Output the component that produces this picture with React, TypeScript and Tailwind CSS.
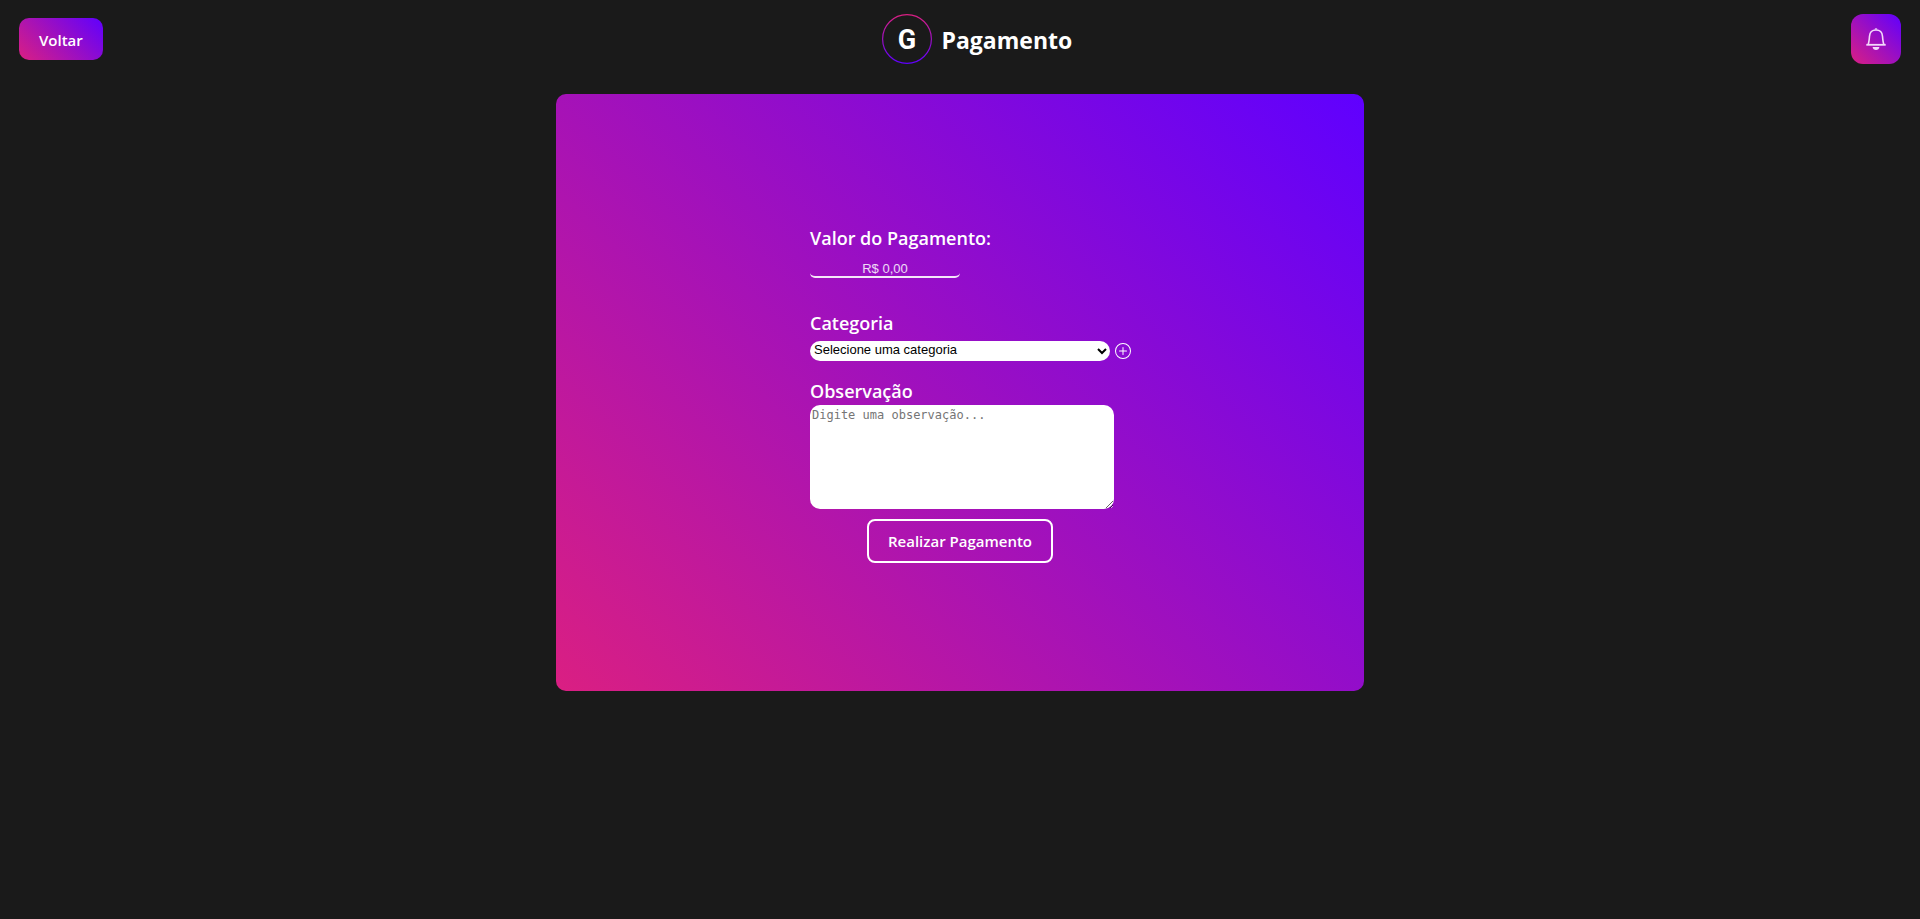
import { useState } from "react";
import { BsPlusCircle } from "react-icons/bs";

const labelClass = "text-lg leading-6 font-semibold";

function BellIcon() {
  return (
    <svg viewBox="0 0 20 22" className="h-[22px] w-5" fill="none" stroke="#f3d9fb" aria-hidden="true">
      <path d="M8.6 1.6a1.4 1.4 0 0 1 2.8 0z" fill="#f3d9fb" stroke="none" />
      <path
        d="M2.2 16.2C3 14.4 3.2 12 3.5 8.2 3.8 4.200 6.400 2 10 2s6.200 2.200 6.500 6.200c.3 3.800.5 6.200 1.300 8"
        strokeWidth="1.6"
      />
      <path d="M0.300 16.800h19.400" strokeWidth="1.800" />
      <path d="M6.600 19h6.800c-.2 1.900-1.600 3-3.400 3s-3.200-1.100-3.400-3z" fill="#f3d9fb" stroke="none" />
    </svg>
  );
}

export default function App() {
  const [amount, setAmount] = useState("");
  const [category, setCategory] = useState("");
  const [note, setNote] = useState("");

  return (
    <div className="flex min-h-screen flex-col bg-[#1a1a1a] font-['Open_Sans',sans-serif] text-white">
      <header className="flex items-center justify-between px-[19px] pt-[14px]">
        <button
          type="button"
          className="h-[42px] rounded-[10px] bg-linear-[45deg,#da1f82,#5f00ff] px-5 pt-[2px] text-[15px] font-semibold"
        >
          Voltar
        </button>
        <div className="flex items-center gap-[10px]">
          <svg viewBox="0 0 50 50" className="size-[50px]" role="img" aria-label="G">
            <defs>
              <linearGradient id="ring" x1="0" y1="0" x2="0" y2="1">
                <stop offset="0" stopColor="#da1f82" />
                <stop offset="1" stopColor="#5f00ff" />
              </linearGradient>
            </defs>
            <circle cx="25" cy="25" r="24.4" fill="none" stroke="url(#ring)" strokeWidth="1.2" />
            <text
              x="25"
              y="35"
              textAnchor="middle"
              fill="#fff"
              fontFamily="Roboto, sans-serif"
              fontSize="27"
              fontWeight="700"
            >
              G
            </text>
          </svg>
          <h1 className="pt-[2px] text-[23px] leading-8 font-bold">Pagamento</h1>
        </div>
        <button
          type="button"
          aria-label="Notificações"
          className="flex size-[50px] items-center justify-center rounded-xl bg-linear-[45deg,#da1f82,#5f00ff]"
        >
          <BellIcon />
        </button>
      </header>

      <main className="mx-auto mt-[30px] flex w-full max-w-[808px] justify-center rounded-[10px] bg-linear-[45deg,#da1f82,#5f00ff] pt-[132px] pb-32">
        <form className="flex w-[300px] flex-col items-start" onSubmit={(e) => e.preventDefault()}>
          <label htmlFor="amount" className={labelClass}>
            Valor do Pagamento:
          </label>
          <input
            id="amount"
            type="text"
            value={amount}
            onChange={(e) => setAmount(e.target.value)}
            placeholder="R$ 0,00"
            className="mt-2 h-5 w-[150px] rounded-[5px] border-b-2 border-white/90 bg-transparent pt-[2px] text-center font-['Liberation_Sans',sans-serif] text-[13px] outline-none placeholder:text-white/85"
          />

          <label htmlFor="category" className={`mt-[33px] ${labelClass}`}>
            Categoria
          </label>
          <div className="mt-[6px] flex items-center gap-[5px]">
            <select
              id="category"
              value={category}
              onChange={(e) => setCategory(e.target.value)}
              className="h-5 w-[300px] shrink-0 rounded-[10px] bg-white pb-1 font-['Liberation_Sans',sans-serif] text-[13px] text-black"
            >
              <option value="">Selecione uma categoria</option>
            </select>
            <button type="button" aria-label="Adicionar categoria" className="shrink-0">
              <BsPlusCircle className="size-4" />
            </button>
          </div>

          <label htmlFor="note" className={`mt-[18px] ${labelClass}`}>
            Observação
          </label>
          <textarea
            id="note"
            value={note}
            onChange={(e) => setNote(e.target.value)}
            placeholder="Digite uma observação..."
            className="mt-[2px] h-[104px] w-[304px] rounded-[10px] bg-white p-[2px] font-['DejaVu_Sans_Mono',monospace] text-[12px] leading-4 text-black placeholder:text-[#757575]"
          />
          <button
            type="submit"
            className="mt-[10px] h-11 self-center rounded-lg border-2 border-white px-[19px] text-[15px] font-semibold"
          >
            Realizar Pagamento
          </button>
        </form>
      </main>
    </div>
  );
}
